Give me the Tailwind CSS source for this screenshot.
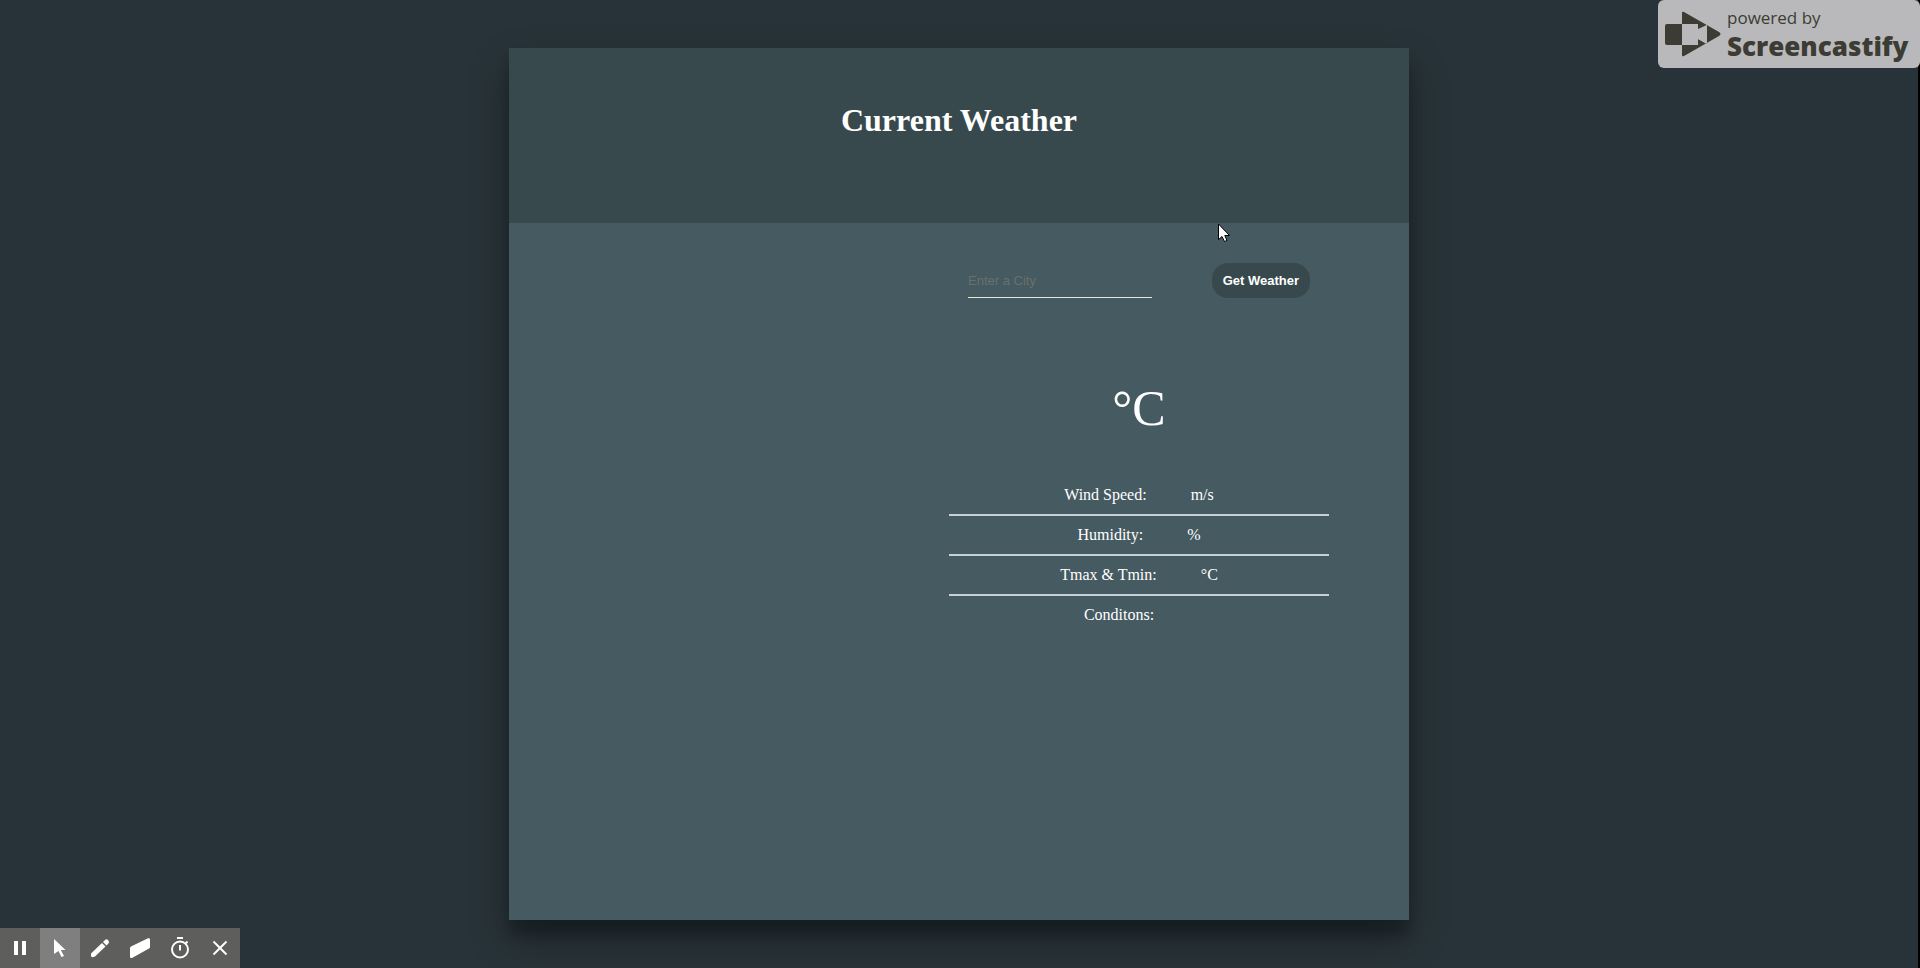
<!DOCTYPE html>
<html lang="en">
<head>
<meta charset="utf-8">
<title>Current Weather</title>
<script src="https://cdn.jsdelivr.net/npm/@tailwindcss/browser@4"></script>
</head>
<body class="min-h-screen bg-[#283339] border-r-2 border-black text-white text-base font-['Liberation_Serif',serif]">
  <main class="flex min-h-screen py-12">
    <section class="mx-auto flex w-full max-w-[900px] flex-col bg-[#455a61] shadow-[0_19px_38px_rgba(0,0,0,0.3),0_15px_12px_rgba(0,0,0,0.22)]">
      <header class="h-[175px] bg-[#38494e] pt-[54px] text-center">
        <h1 class="text-[32px] leading-9 font-bold">Current Weather</h1>
      </header>
      <div class="grid flex-1 grid-cols-[440px_380px] content-start">
        <div></div>
        <div class="flex flex-col text-center">
          <form class="flex items-end justify-between px-[19px] pt-10 font-['Liberation_Sans',sans-serif] text-[13px]">
            <input type="text" aria-label="City" placeholder="Enter a City" class="h-[35px] w-[184px] border-b border-[#e3e8d0] bg-transparent placeholder:text-[#68716c] outline-none">
            <button type="button" class="h-[35px] rounded-2xl bg-[#38494e] px-[11px] font-bold">Get Weather</button>
          </form>
          <p class="pt-20 text-[50px] leading-[60px]">°C</p>
          <ul class="pt-[38px]">
            <li class="h-10 border-b-2 border-[#c5cfe0] leading-[38px]">Wind Speed: <span class="mx-5"></span>m/s</li>
            <li class="h-10 border-b-2 border-[#c5cfe0] leading-[38px]">Humidity: <span class="mx-5"></span>%</li>
            <li class="h-10 border-b-2 border-[#c5cfe0] leading-[38px]">Tmax &amp; Tmin: <span class="mx-5"></span>°C</li>
            <li class="h-10 leading-[38px]">Conditons: <span class="mx-5"></span></li>
          </ul>
        </div>
      </div>
    </section>
  </main>

  <!-- recorder badge -->
  <div class="absolute top-0 right-0 flex h-[68px] w-[262px] items-center rounded-md bg-[#b9b9bb] pl-[7px] font-['Open_Sans',sans-serif] text-[#3c3c34]">
    <svg class="h-[46px] w-[56px] shrink-0" viewBox="0 0 56 46" fill="currentColor" aria-hidden="true">
      <path d="M2 13H17V34H2Q0 34 0 32V15Q0 13 2 13Z"/>
      <path d="M17 2Q17 0 19 1L54 21Q57 23 54 25L19 45Q17 46 17 44V34H33V28L42 33V14L33 18V13H17Z"/>
      <path d="M17 13H33V19L42 14V33L33 28V34H17Z" fill="#b9b9bb"/>
    </svg>
    <div class="ml-1.5 flex flex-col">
      <span class="text-[17px] leading-6">powered by</span>
      <span class="text-[26px] leading-8 font-extrabold">Screencastify</span>
    </div>
  </div>

  <!-- recorder toolbar -->
  <div class="absolute bottom-0 left-0 flex h-10 bg-[#5e5e5c] text-white">
    <button type="button" aria-label="Pause" class="flex w-10 items-center justify-center"><svg width="20" height="20" viewBox="0 0 20 20" fill="currentColor"><path d="M4 3H8V17H4ZM12 3H16V17H12Z"/></svg></button>
    <button type="button" aria-label="Pointer" class="flex w-10 items-center justify-center bg-[#7f7f7f]"><svg width="20" height="20" viewBox="0 0 20 20" fill="currentColor"><path d="M4 1L15.500 12H10.800L14 18L11.500 19L8.500 13L4 16Z"/></svg></button>
    <button type="button" aria-label="Pen" class="flex w-10 items-center justify-center"><svg width="20" height="20" viewBox="0 0 20 20" fill="currentColor"><path d="M1 15.500L12 5L15.500 8.500L5 18.500Q1 20 1 18ZM13 4L15 2Q16.500 .500 18 2Q19.800 3.500 18.500 5.500L16.500 7.500Z"/></svg></button>
    <button type="button" aria-label="Eraser" class="flex w-10 items-center justify-center"><svg width="20" height="20" viewBox="0 0 20 20" fill="currentColor"><path d="M0 10Q0 9 1 8.500L18 .300Q20 -.200 20 1.500V9Q20 10 19 10.600L2 20Q0 20.500 0 18.500Z"/></svg></button>
    <button type="button" aria-label="Timer" class="flex w-10 items-center justify-center"><svg width="20" height="22" viewBox="0 0 20 22" fill="none" stroke="currentColor" stroke-width="2"><circle cx="10" cy="12.500" r="8"/><path d="M7 1H13M10 8V13.500M15.500 6.500L17.500 4.500"/></svg></button>
    <button type="button" aria-label="Close" class="flex w-10 items-center justify-center"><svg width="20" height="20" viewBox="0 0 20 20" fill="none" stroke="currentColor" stroke-width="2"><path d="M3.500 3.500L16.500 16.500M16.500 3.500L3.500 16.500"/></svg></button>
  </div>

  <!-- mouse pointer -->
  <svg class="absolute top-[223px] left-[1218px]" width="13" height="20" viewBox="0 0 13 20" aria-hidden="true"><path d="M.500 1V16.500L4 13.500L6.500 18.500L9 17.500L6.800 12.500H11.500Z" fill="#fff" stroke="#000" stroke-width="1"/></svg>
</body>
</html>
